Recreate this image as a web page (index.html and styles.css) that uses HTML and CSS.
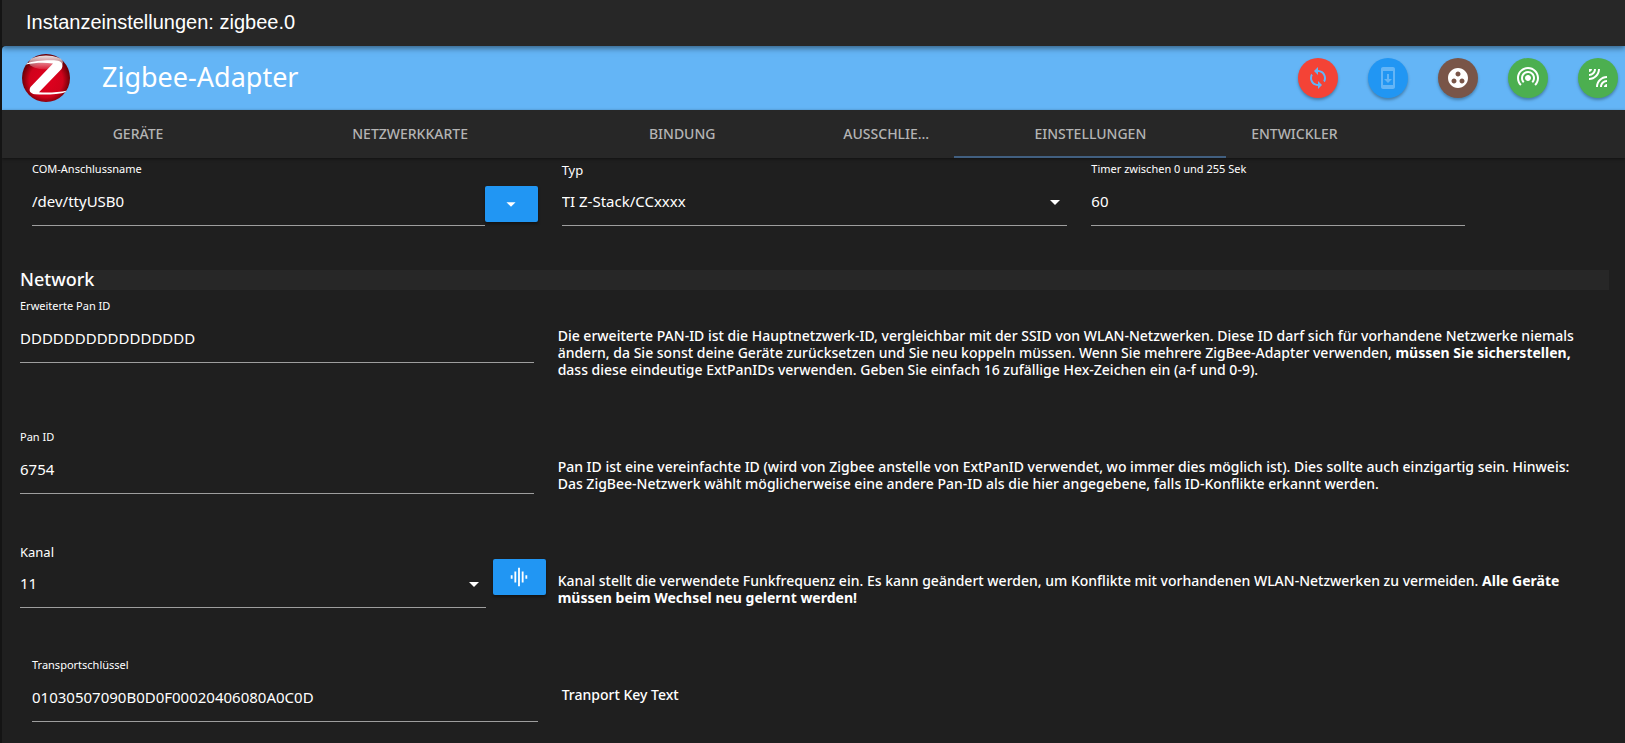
FILE: index.html
```html
<!DOCTYPE html>
<html lang="de">
  <head>
    <meta charset="UTF-8" />
    <meta name="viewport" content="width=device-width, initial-scale=1.0" />
    <title>Instanzeinstellungen: zigbee.0</title>
    <link rel="stylesheet" href="styles.css">
  </head>
  <body>
    <div class="titleBar">Instanzeinstellungen: zigbee.0</div>

    <header class="header">
      <svg class="logo" viewBox="0 0 48 48" aria-hidden="true">
        <defs>
          <radialGradient id="ball" cx="50%" cy="55%" r="50%">
            <stop offset="0" stop-color="#e2001f" />
            <stop offset="0.7" stop-color="#d0021b" />
            <stop offset="1" stop-color="#6d0008" />
          </radialGradient>
          <linearGradient id="shine" x1="0" y1="0" x2="0" y2="1">
            <stop offset="0" stop-color="#fff" stop-opacity="0.9" />
            <stop offset="1" stop-color="#fff" stop-opacity="0.1" />
          </linearGradient>
          <clipPath id="ballClip"><circle cx="24" cy="24" r="24" /></clipPath>
        </defs>
        <circle cx="24" cy="24" r="24" fill="url(#ball)" />
        <ellipse cx="24" cy="8.500" rx="17" ry="7" fill="url(#shine)" />
        <path
          clip-path="url(#ballClip)"
          fill="#fff"
          d="M4 9.500C13 6.500 27 5.700 36 6.700C40.500 7.500 41.500 11.500 39.500 15L17 38.300C26 39 36 38.500 45.500 36.500L44.500 38C36 40.500 24 41 13 40.300C8 39.500 6.500 36.500 8.500 33L31 9.500C22 8 13 8.500 4 10.500Z"
        />
      </svg>
      <h1 class="appName">Zigbee-Adapter</h1>
      <div class="actions">
        <button class="round red" aria-label="Neu starten">
          <svg viewBox="0 0 24 24"><path d="M12 4V1L8 5l4 4V6c3.310 0 6 2.690 6 6 0 1.010-.250 1.970-.700 2.800l1.460 1.460C19.540 15.030 20 13.570 20 12c0-4.420-3.580-8-8-8zm0 14c-3.310 0-6-2.690-6-6 0-1.010.250-1.970.700-2.800L5.240 7.740C4.460 8.970 4 10.430 4 12c0 4.420 3.580 8 8 8v3l4-4-4-4v3z" /></svg>
        </button>
        <button class="round blue" aria-label="Firmware prüfen">
          <svg viewBox="0 0 24 24"><path d="M17 1.010L7 1c-1.100 0-2 .900-2 2v18c0 1.100.900 2 2 2h10c1.100 0 2-.900 2-2V3c0-1.100-.900-1.990-2-1.990zM17 19H7V5h10v14zm-1-6h-3V8h-2v5H8l4 4 4-4z" /></svg>
        </button>
        <button class="round brown" aria-label="Gruppen">
          <svg viewBox="0 0 24 24"><path d="M12 2C6.480 2 2 6.480 2 12s4.480 10 10 10 10-4.480 10-10S17.520 2 12 2zM8 17.500c-1.380 0-2.500-1.120-2.500-2.500s1.120-2.500 2.500-2.500 2.500 1.120 2.500 2.500-1.120 2.500-2.500 2.500zM9.500 8c0-1.380 1.120-2.500 2.500-2.500s2.500 1.120 2.500 2.500-1.120 2.500-2.500 2.500S9.500 9.380 9.500 8zm6.500 9.500c-1.380 0-2.500-1.120-2.500-2.500s1.120-2.500 2.500-2.500 2.500 1.120 2.500 2.500-1.120 2.500-2.500 2.500z" /></svg>
        </button>
        <button class="round green" aria-label="Anlernen">
          <svg viewBox="0 0 24 24"><path d="M12 5c-3.870 0-7 3.130-7 7 0 1.930.780 3.680 2.050 4.950l1.410-1.410C7.560 14.630 7 13.380 7 12c0-2.760 2.240-5 5-5s5 2.240 5 5c0 1.380-.560 2.630-1.460 3.540l1.410 1.410C18.220 15.680 19 13.930 19 12c0-3.870-3.130-7-7-7zm0-4C5.930 1 1 5.930 1 12c0 3.040 1.230 5.790 3.220 7.780l1.410-1.410C4.010 16.740 3 14.490 3 12c0-4.970 4.030-9 9-9s9 4.030 9 9c0 2.490-1.010 4.740-2.640 6.360l1.410 1.410C21.770 17.790 23 15.040 23 12c0-6.070-4.930-11-11-11zm0 8c-1.660 0-3 1.340-3 3s1.340 3 3 3 3-1.340 3-3-1.340-3-3-3z" /></svg>
        </button>
        <button class="round green" aria-label="Touchlink">
          <svg viewBox="0 0 24 24"><path d="M6 3H3v3c1.660 0 3-1.340 3-3zm8 0h-2c0 4.970-4.030 9-9 9v2c6.080 0 11-4.930 11-11zm-4 0H8c0 2.760-2.240 5-5 5v2c3.870 0 7-3.130 7-7zm0 18h2c0-4.970 4.030-9 9-9v-2c-6.070 0-11 4.930-11 11zm8 0h3v-3c-1.660 0-3 1.340-3 3zm-4 0h2c0-2.760 2.240-5 5-5v-2c-3.870 0-7 3.130-7 7z" /></svg>
        </button>
      </div>
    </header>

    <nav class="tabs">
      <a href="#devices">Geräte</a>
      <a href="#map">Netzwerkkarte</a>
      <a href="#binding">Bindung</a>
      <a href="#exclude">Ausschlie…</a>
      <a href="#settings" class="active">Einstellungen</a>
      <a href="#developer">Entwickler</a>
    </nav>

    <main class="settings">
      <div class="row inner top">
        <div class="withButton">
          <div class="field">
            <label for="port">COM-Anschlussname</label>
            <input id="port" type="text" value="/dev/ttyUSB0">
          </div>
          <button class="small" aria-label="Anschluss wählen">
            <svg viewBox="0 0 24 24"><path d="M7 10l5 5 5-5z" /></svg>
          </button>
        </div>
        <div class="field">
          <label class="big" for="type">Typ</label>
          <select id="type"><option>TI Z-Stack/CCxxxx</option></select>
          <svg class="caret" viewBox="0 0 24 24"><path d="M7 10l5 5 5-5z" /></svg>
        </div>
        <div class="field timer">
          <label for="timer">Timer zwischen 0 und 255 Sek</label>
          <input id="timer" type="text" value="60">
        </div>
      </div>

      <h2 class="section">Network</h2>

      <div class="row tall">
        <div class="field">
          <label for="extPan">Erweiterte Pan ID</label>
          <input id="extPan" type="text" value="DDDDDDDDDDDDDDDD">
        </div>
        <p>
          Die erweiterte PAN-ID ist die Hauptnetzwerk-ID, vergleichbar mit der SSID von WLAN-Netzwerken. Diese ID darf sich für vorhandene Netzwerke niemals
          ändern, da Sie sonst deine Geräte zurücksetzen und Sie neu koppeln müssen. Wenn Sie mehrere ZigBee-Adapter verwenden, <b>müssen Sie sicherstellen,</b>
          dass diese eindeutige ExtPanIDs verwenden. Geben Sie einfach 16 zufällige Hex-Zeichen ein (a-f und 0-9).
        </p>
      </div>

      <div class="row">
        <div class="field">
          <label for="pan">Pan ID</label>
          <input id="pan" type="text" value="6754">
        </div>
        <p>
          Pan ID ist eine vereinfachte ID (wird von Zigbee anstelle von ExtPanID verwendet, wo immer dies möglich ist). Dies sollte auch einzigartig sein. Hinweis:
          Das ZigBee-Netzwerk wählt möglicherweise eine andere Pan-ID als die hier angegebene, falls ID-Konflikte erkannt werden.
        </p>
      </div>

      <div class="row">
        <div class="withButton channel">
          <div class="field">
            <label class="big" for="channel">Kanal</label>
            <select id="channel"><option>11</option></select>
            <svg class="caret" viewBox="0 0 24 24"><path d="M7 10l5 5 5-5z" /></svg>
          </div>
          <button class="small" aria-label="Energiescan">
            <svg viewBox="0 0 24 24"><path d="M7 18h2V6H7v12zm4 4h2V2h-2v20zm-8-8h2v-4H3v4zm12 4h2V6h-2v12zm4-8v4h2v-4h-2z" /></svg>
          </button>
        </div>
        <p>
          Kanal stellt die verwendete Funkfrequenz ein. Es kann geändert werden, um Konflikte mit vorhandenen WLAN-Netzwerken zu vermeiden. <b>Alle Geräte
          müssen beim Wechsel neu gelernt werden!</b>
        </p>
      </div>

      <div class="row inner last">
        <div class="field">
          <label for="key">Transportschlüssel</label>
          <input id="key" type="text" value="01030507090B0D0F00020406080A0C0D">
        </div>
        <p>Tranport Key Text</p>
      </div>
    </main>
  </body>
</html>
```
FILE: styles.css
```css
* {
  box-sizing: border-box;
}

body {
  min-height: 100vh;
  margin: 0;
  border-left: 2px solid #141414;
  background-color: #1f1f1f;
  color: #fff;
  font-family: "Noto Sans", "Open Sans", sans-serif;
  font-size: 14px;
}

button {
  border: none;
  padding: 0;
  cursor: pointer;
}

.titleBar {
  position: relative;
  height: 46px;
  padding-left: 24px;
  background-color: #272727;
  box-shadow: 0 2px 6px rgba(0, 0, 0, 0.5);
  font-family: "Liberation Sans", Arial, sans-serif;
  font-size: 20px;
  line-height: 44px;
}

.header {
  display: flex;
  align-items: center;
  height: 64px;
  padding: 0 7px 0 20px;
  border-top-left-radius: 4px;
  background-color: #64b5f6;
}

.logo {
  width: 48px;
  height: 48px;
}

.appName {
  margin: 0 0 0 32px;
  padding-bottom: 4px;
  font-size: 27px;
  font-weight: 400;
}

.actions {
  display: flex;
  gap: 30px;
  margin-left: auto;
}

.round {
  display: flex;
  align-items: center;
  justify-content: center;
  width: 40px;
  height: 40px;
  border-radius: 50%;
  box-shadow: 0 2px 3px rgba(0, 0, 0, 0.3);
  fill: #fff;
}

.round svg {
  width: 24px;
  height: 24px;
}

.red {
  background-color: #f44336;
  fill: #64b5f6;
}

.blue {
  background-color: #2196f3;
  fill: #64b5f6;
}

.brown {
  background-color: #795548;
}

.green {
  background-color: #4caf50;
}

/* the exclude and developer tabs are half as wide as the others */
.tabs {
  position: relative;
  display: grid;
  grid-template-columns: 2fr 2fr 2fr 1fr 2fr 1fr 1.93fr;
  height: 48px;
  background-color: #272727;
  box-shadow: 0 1px 3px rgba(0, 0, 0, 0.5);
}

.tabs a {
  color: #b4b4b4;
  font-weight: 500;
  line-height: 48px;
  text-align: center;
  text-decoration: none;
  text-transform: uppercase;
}

.tabs .active {
  box-shadow: inset 0 -2px #415f80;
}

.settings {
  padding: 3px 4px 0 6px;
}

.row {
  display: grid;
  grid-template-columns: repeat(12, 1fr);
  column-gap: 24px;
  min-height: 114px;
  padding: 0 12px;
}

.row > * {
  grid-column: span 4;
}

.row > p {
  grid-column: span 8;
}

.row > .timer {
  grid-column: span 3;
}

.row.inner {
  padding: 0 24px;
}

.row.top {
  min-height: 109px;
}

.row.tall {
  min-height: 131px;
}

.row.last {
  min-height: 80px;
}

.field {
  position: relative;
  display: flex;
  flex-direction: column;
  gap: 3px;
  flex: 1;
}

label {
  height: 16px;
  font-size: 11px;
  line-height: 16px;
}

label.big {
  font-size: 13px;
  line-height: 18px;
}

input,
select {
  width: 100%;
  height: 46px;
  padding: 0 0 4px;
  border: none;
  border-bottom: 1px solid #9e9e9e;
  border-radius: 0;
  outline: none;
  appearance: none;
  background-color: transparent;
  color: #fff;
  font-family: inherit;
  font-size: 15px;
}

.caret {
  position: absolute;
  top: 29px;
  right: 0;
  width: 24px;
  height: 24px;
  fill: #fff;
  pointer-events: none;
}

.withButton {
  display: flex;
  align-items: flex-start;
}

.small {
  display: flex;
  align-items: center;
  justify-content: center;
  width: 53px;
  height: 36px;
  margin-top: 25px;
  border-radius: 2px;
  background-color: #2196f3;
  box-shadow: 0 2px 3px rgba(0, 0, 0, 0.4);
  fill: #fff;
}

.small svg {
  width: 22px;
  height: 22px;
}

.channel {
  gap: 7px;
  margin-right: -12px;
}

.channel .small {
  margin-top: 16px;
}

.section {
  height: 20px;
  margin: 0 12px 8px;
  background-color: #272727;
  font-size: 18px;
  font-weight: 500;
  line-height: 18px;
}

p {
  margin: 29px 0 0;
  padding-right: 20px;
  font-weight: 500;
  line-height: 17px;
}
```
